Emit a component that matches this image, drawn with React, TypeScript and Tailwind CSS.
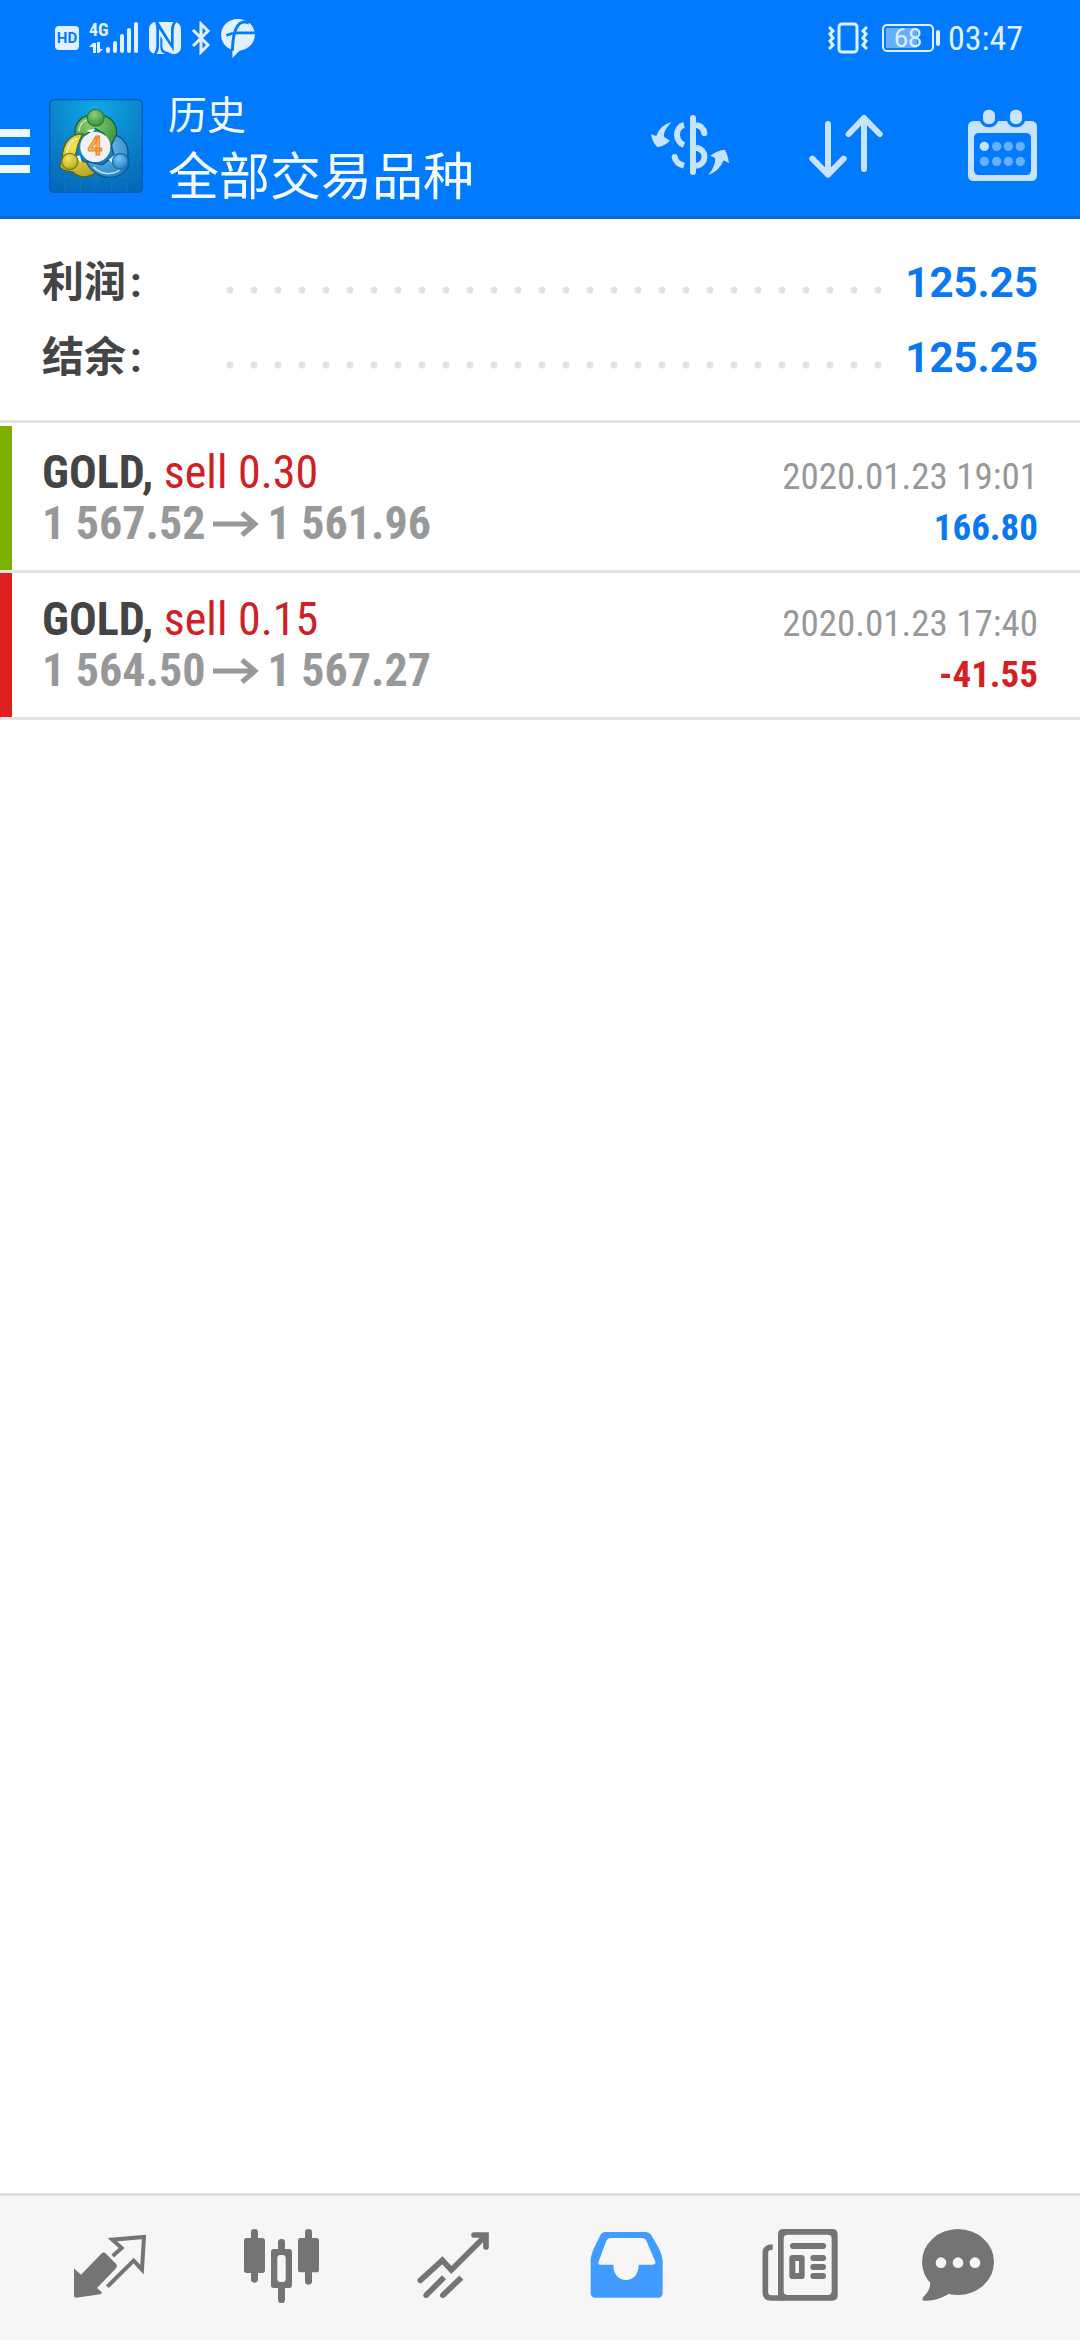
import type { ReactNode } from "react";

type Deal = {
  symbol: string;
  side: string;
  open: string;
  close: string;
  time: string;
  profit: string;
  win: boolean;
};

const deals: Deal[] = [
  { symbol: "GOLD,", side: "sell 0.30", open: "1 567.52", close: "1 561.96", time: "2020.01.23 19:01", profit: "166.80", win: true },
  { symbol: "GOLD,", side: "sell 0.15", open: "1 564.50", close: "1 567.27", time: "2020.01.23 17:40", profit: "-41.55", win: false },
];

const totals = [
  { label: "利润", value: "125.25" },
  { label: "结余", value: "125.25" },
];

function StatusBar() {
  return (
    <div className="flex h-[76px] items-center justify-between pl-[55px] pr-[57px] text-[#e2f1ff]">
      <div className="flex items-center gap-[10px]">
        {/* HD voice */}
        <svg viewBox="0 0 24 24" className="h-6 w-6">
          <rect width="24" height="24" rx="4" fill="currentColor" />
          <text x="12" y="17" textAnchor="middle" fontSize="15" fontWeight="700" fontFamily="Roboto" fill="#007aff">HD</text>
        </svg>
        {/* Mobile signal */}
        <svg viewBox="0 -4 50 40" className="h-10 w-[50px]" fill="currentColor">
          <text x="0" y="14" fontSize="18" fontWeight="700" fontFamily="Roboto Condensed, Roboto">4G</text>
          <path d="M0 25l4-4h3v10H4v-6zM8 20h3v7h3l-4 4H8z" />
          <rect x="17" y="25" width="4" height="6" rx="2" />
          <rect x="24" y="19" width="4" height="12" rx="2" />
          <rect x="31" y="12" width="4" height="19" rx="2" />
          <rect x="38" y="6" width="4" height="25" rx="2" />
          <rect x="45" y="0" width="4" height="31" rx="2" />
        </svg>
        {/* NFC */}
        <svg viewBox="0 0 96 96" className="h-8 w-8">
          <rect width="96" height="96" rx="20" fill="currentColor" />
          <g fill="#007aff">
            <path d="M18 0 H28 L66 62 V24 Q66 8 74 0 H82 Q74 10 74 26 V88 L30 20 V72 Q30 88 22 96 H14 Q22 86 22 72 V24 Q22 10 18 0Z" />
            <path d="M34 42 L40 52 V74 Q40 84 50 88 L70 96 H48 Q34 92 34 76Z" />
          </g>
        </svg>
        {/* Bluetooth */}
        <svg viewBox="0 0 20 34" className="h-[34px] w-5" fill="none" stroke="currentColor" strokeWidth="3">
          <path d="M2 9 L17 24 L10 31 V3 L17 10 L2 25" />
        </svg>
        <svg viewBox="0 0 102 118" className="h-[39px] w-[34px]">
          <path d="M51 0 C80 0 102 20 102 48 C102 76 80 92 56 96 L34 118 V94 C14 88 0 70 0 48 C0 20 22 0 51 0Z" fill="currentColor" />
          <path d="M16 50 Q32 42 50 42 H102 M34 96 Q36 30 56 14 Q68 6 84 12" fill="none" stroke="#007aff" strokeWidth="9" />
        </svg>
      </div>

      <div className="flex items-center">
        {/* Vibrate mode */}
        <svg viewBox="0 0 40 32" className="mr-[14px] h-8 w-10" fill="none" stroke="currentColor" strokeWidth="3">
          <rect x="11" y="2" width="18" height="28" rx="3" />
          <path d="M1 5 l4 4 -3 3 3 4 -3 3 3 4 -4 4 M39 5 l-4 4 3 3 -3 4 3 3 -3 4 4 4" />
        </svg>
        <svg viewBox="0 0 58 28" className="mr-[8px] h-7 w-[58px]">
          <rect x="1" y="1" width="50" height="26" rx="4" fill="none" stroke="currentColor" strokeWidth="2" />
          <rect x="4" y="4" width="31" height="20" fill="#66aeff" />
          <rect x="54" y="6" width="4" height="16" rx="2" fill="currentColor" />
          <text x="26" y="23" textAnchor="middle" fontSize="25" fontFamily="Roboto" fill="currentColor">68</text>
        </svg>
        <span className="font-['Roboto_Condensed','Roboto',sans-serif] text-[34px] leading-[40px]">03:47</span>
      </div>
    </div>
  );
}

function AppLogo() {
  return (
    <svg viewBox="0 0 280 280" className="h-[94px] w-[94px] shrink-0">
      <defs>
        <radialGradient id="tile" cx="0.5" cy="0.1" r="0.95">
          <stop offset="0" stopColor="#10a8e4" />
          <stop offset="0.6" stopColor="#087fc8" />
          <stop offset="1" stopColor="#0468ba" />
        </radialGradient>
        <radialGradient id="green" cx="0.4" cy="0.3" r="0.8">
          <stop offset="0" stopColor="#8fce70" />
          <stop offset="1" stopColor="#2c8a3a" />
        </radialGradient>
        <radialGradient id="yellow" cx="0.4" cy="0.3" r="0.8">
          <stop offset="0" stopColor="#f0e556" />
          <stop offset="1" stopColor="#b5a31c" />
        </radialGradient>
        <radialGradient id="blue" cx="0.4" cy="0.3" r="0.8">
          <stop offset="0" stopColor="#7cc6f0" />
          <stop offset="1" stopColor="#1c7cc4" />
        </radialGradient>
      </defs>
      <rect x="2" y="2" width="276" height="276" rx="14" fill="url(#tile)" stroke="#0559b4" strokeWidth="4" />
      <path d="M48 4V276M94 4V276M140 4V276M186 4V276M232 4V276M4 48H276M4 94H276M4 140H276M4 186H276M4 232H276" stroke="#2a9cdb" strokeOpacity="0.3" strokeWidth="2" />
      {/* three figures around the coin */}
      <g strokeLinejoin="round" strokeWidth="4">
        <path d="M78 108 C74 70 98 46 138 46 C182 46 208 74 200 116 C198 132 190 144 178 150 L164 104 L138 88 L110 106Z" fill="url(#green)" stroke="#1d5c38" />
        <path d="M100 104 C66 102 38 132 40 176 L32 200 C38 216 58 214 72 218 C86 234 118 238 138 220 L116 190 L76 178 L86 138Z" fill="url(#yellow)" stroke="#59601c" />
        <path d="M200 108 C226 118 240 144 234 170 C240 184 240 204 226 214 C206 238 166 240 138 220 C122 208 114 196 112 186 L160 196 L194 168 L186 138Z" fill="url(#blue)" stroke="#12558f" />
        <path d="M90 96 C90 70 110 58 138 58 M54 160 C54 138 68 122 84 118 M132 202 C156 228 190 226 210 212" fill="none" stroke="#e8f8d8" strokeOpacity="0.75" strokeWidth="5" />
        <path d="M112 94 L138 88 L128 102Z M70 172 L92 168 L98 190Z M178 180 L196 166 L190 192Z" fill="#f4f8f4" />
        <circle cx="139" cy="56" r="25" fill="url(#green)" stroke="#2b7a40" />
        <circle cx="62" cy="186" r="24" fill="url(#yellow)" stroke="#7c7d1c" />
        <circle cx="212" cy="186" r="23" fill="url(#blue)" stroke="#1b6fb0" />
      </g>
      <circle cx="138" cy="143" r="45" fill="#f1f1f4" />
      <text x="137" y="168" textAnchor="middle" fontSize="76" fontWeight="700" fontFamily="Roboto" fill="#f9b45c" stroke="#e8862c" strokeWidth="3">4</text>
    </svg>
  );
}

function HeaderButton({ label, children }: { label: string; children: ReactNode }) {
  return (
    <button type="button" aria-label={label} className="flex h-full w-[156px] items-center justify-center text-[#c8e3ff]">
      <svg viewBox="0 0 324 324" className="h-[108px] w-[108px]">{children}</svg>
    </button>
  );
}

function Header() {
  return (
    <header className="flex h-[143px] items-center border-b-[3px] border-[#1069cc]">
      <button type="button" aria-label="菜单" className="mr-[19px] pt-1 text-[#ecfaff]">
        <svg viewBox="0 0 30 50" className="h-[50px] w-[30px]" fill="currentColor">
          <path d="M0 6H30V14H0zM0 24H30V32H0zM0 42H30V50H0z" />
        </svg>
      </button>
      <AppLogo />
      <div className="ml-[25px] flex-1 pt-1 text-[#f4fcff]">
        <p className="text-[39px] leading-[60px]">历史</p>
        <h1 className="text-[51px] leading-[64px]">全部交易品种</h1>
      </div>
      <HeaderButton label="交易品种">
        <g fill="currentColor">
          <path d="M107 90 C92 106 82 120 84 134 L102 146 Q84 164 64 165 Q50 154 45 127 L61 132 Q72 99 107 90Z" />
          <path d="M216 249 C228 237 240 214 237 198 L223 191 Q242 176 266 173 Q276 189 279 214 L263 205 Q249 239 216 249Z" />
          <rect x="162" y="69" width="18" height="180" rx="9" />
        </g>
        <g fill="none" stroke="currentColor" strokeWidth="18">
          <path d="M144 99 C116 106 116 148 144 159" />
          <path d="M180 99 Q202 102 205 124 M144 221 Q120 215 116 195" strokeLinecap="butt" />
          <path d="M180 167 C214 172 214 216 180 222" />
        </g>
        <circle cx="205" cy="124" r="9" fill="currentColor" />
        <circle cx="116" cy="195" r="9" fill="currentColor" />
      </HeaderButton>
      <HeaderButton label="排序">
        <path
          d="M108 96 V248 M61 200 L108 248 L155 200 M216 231 V78 M170 126 L216 78 L263 126"
          fill="none"
          stroke="currentColor"
          strokeWidth="18"
          strokeLinecap="round"
          strokeLinejoin="round"
        />
      </HeaderButton>
      <HeaderButton label="日期">
        <rect x="60" y="87" width="207" height="180" rx="16" fill="currentColor" />
        <rect x="78" y="123" width="171" height="126" rx="14" fill="#007aff" />
        <g fill="currentColor" stroke="#007aff" strokeWidth="10">
          <rect x="100" y="48" width="46" height="53" rx="21" />
          <rect x="181" y="48" width="46" height="53" rx="21" />
        </g>
        <circle cx="109" cy="163" r="14" fill="currentColor" />
        <g fill="#66b0ff">
          <circle cx="146" cy="163" r="14" />
          <circle cx="181" cy="163" r="14" />
          <circle cx="217" cy="163" r="14" />
          <circle cx="109" cy="208" r="14" />
          <circle cx="146" cy="208" r="14" />
          <circle cx="181" cy="208" r="14" />
          <circle cx="217" cy="208" r="14" />
        </g>
      </HeaderButton>
    </header>
  );
}

function Totals() {
  return (
    <dl className="border-b-[3px] border-[#e4e4e4] px-[42px] pt-[26px] pb-[25px]">
      {totals.map((t) => (
        <div key={t.label} className="flex h-[75px] items-center font-bold">
          <dt className="flex w-[176px] gap-1 text-[42px] leading-[48px] text-[#444444]">
            {t.label}
            <span>:</span>
          </dt>
          {/* dotted leader */}
          <div className="mt-[14px] mr-[15px] h-2 flex-1 bg-[radial-gradient(circle,#e2e2e2_3px,transparent_4px)] bg-[length:24px_8px] [background-repeat:round]" />
          <dd className="text-[42px] leading-[48px] text-[#0a78f0]">{t.value}</dd>
        </div>
      ))}
    </dl>
  );
}

function DealRow({ deal }: { deal: Deal }) {
  return (
    <li className="flex h-[147px] border-b-[3px] border-[#e4e4e4] font-['Roboto_Condensed','Roboto',sans-serif]">
      <div className={deal.win ? "w-3 bg-[#7fb000]" : "w-3 bg-[#e01f1f]"} />
      <div className="flex flex-1 justify-between pt-[21px] pr-[42px] pl-[30px]">
        <div className="text-[46px] leading-[51px]">
          <p>
            <span className="font-bold text-[#444444]">{deal.symbol}</span>{" "}
            <span className="text-[#d02024]">{deal.side}</span>
          </p>
          <p className="flex items-center gap-2 font-bold text-[#979899]">
            {deal.open}
            <svg viewBox="0 0 46 26" className="h-[26px] w-[46px]" fill="none" stroke="currentColor" strokeWidth="5">
              <path d="M0 13 H42 M29 2 L42 13 L29 24" />
            </svg>
            {deal.close}
          </p>
        </div>
        <div className="pt-1 text-right text-[37px] leading-[51px]">
          <p className="text-[#979899]">{deal.time}</p>
          <p className={deal.win ? "font-bold text-[#0a78f0]" : "font-bold text-[#d61f22]"}>{deal.profit}</p>
        </div>
      </div>
    </li>
  );
}

function Tab({ label, active, children }: { label: string; active?: boolean; children: ReactNode }) {
  return (
    <a
      href="#"
      aria-label={label}
      className={active ? "flex items-center justify-center text-[#429bff]" : "flex items-center justify-center text-[#747474]"}
    >
      <svg viewBox="0 0 327 324" className="h-[108px] w-[109px]" fill="currentColor">{children}</svg>
    </a>
  );
}

function TabBar() {
  return (
    <nav className="grid h-[147px] grid-cols-6 border-t-[3px] border-[#e0e0e0] bg-[#f6f6f6] pr-[18px] pl-6">
      <Tab label="行情">
        <path d="M54 163 L75 182 L135 120 Q142 112 150 119 L181 151 Q185 157 180 163 L123 222 L137 234 Q138 240 133 241 L60 251 Q54 251 54 246Z" />
        <path d="M170 126 L197 102 L169 77 L264 69 L258 167 L233 140 L154 218" fill="none" stroke="currentColor" strokeWidth="12" />
      </Tab>
      <Tab label="图表">
        <rect x="66" y="45" width="21" height="161" rx="10" />
        <rect x="45" y="72" width="63" height="105" rx="8" />
        <rect x="147" y="75" width="21" height="192" rx="10" />
        <rect x="126" y="105" width="63" height="117" rx="8" />
        <rect x="145" y="123" width="25" height="81" rx="10" fill="#f6f6f6" />
        <rect x="228" y="45" width="21" height="167" rx="10" />
        <rect x="207" y="72" width="63" height="103" rx="8" />
      </Tab>
      <Tab label="交易">
        <g fill="none" stroke="currentColor" strokeWidth="17">
          <path d="M55 199 L121 139 L148 168 L250 66" strokeLinecap="round" />
          <path d="M216 63 H252 V99" strokeLinecap="round" />
          <path d="M72 244 L126 190 M122 244 L178 191" />
        </g>
        <circle cx="72" cy="244" r="8" />
        <circle cx="122" cy="244" r="8" />
      </Tab>
      <Tab label="历史" active>
        <path
          fillRule="evenodd"
          d="M47 138 C48 116 66 82 77 62 Q81 54 92 54 H212 Q222 54 228 62 C242 86 262 113 263 143 V236 Q263 251 248 251 H62 Q47 251 47 236Z M71 143 L94 80 Q98 72 107 72 H203 Q211 72 214 80 L241 143 Q243 152 233 152 H191 C191 182 174 198 153 198 S115 182 115 152 H77 Q67 152 71 143Z"
        />
      </Tab>
      <Tab label="新闻">
        <path fillRule="evenodd" d="M106 45 H253 Q269 45 269 61 V244 Q269 260 253 260 H106 Q90 260 90 244 V61 Q90 45 106 45Z M119 62 Q107 62 107 74 V231 Q107 243 119 243 H239 Q251 243 251 231 V74 Q251 62 239 62Z" />
        <path d="M74 99 Q52 99 52 116 V234 Q52 252 70 252 H110" fill="none" stroke="currentColor" strokeWidth="17" />
        <rect x="126" y="87" width="108" height="18" rx="9" />
        <rect x="124" y="123" width="46" height="72" rx="10" />
        <rect x="142" y="141" width="11" height="36" fill="#f6f6f6" />
        <rect x="187" y="123" width="47" height="18" rx="9" />
        <rect x="187" y="150" width="47" height="18" rx="9" />
        <rect x="187" y="177" width="47" height="18" rx="9" />
      </Tab>
      <Tab label="消息">
        <ellipse cx="111" cy="144" rx="108" ry="99" />
        <path d="M27 206 C30 228 10 244 4 254 Q4 261 15 260 C46 259 70 248 83 239 L110 220Z" />
        <g fill="#f6f6f6">
          <circle cx="60" cy="146" r="16" />
          <circle cx="111" cy="146" r="16" />
          <circle cx="162" cy="146" r="16" />
        </g>
      </Tab>
    </nav>
  );
}

export default function App() {
  return (
    <div className="flex min-h-screen flex-col bg-white font-['Roboto','Noto_Sans_CJK_SC',sans-serif]">
      <div className="bg-[#007aff]">
        <StatusBar />
        <Header />
      </div>
      <main className="flex-1">
        <Totals />
        <ul className="pt-[3px]">
          {deals.map((d) => (
            <DealRow key={d.time} deal={d} />
          ))}
        </ul>
      </main>
      <TabBar />
    </div>
  );
}
